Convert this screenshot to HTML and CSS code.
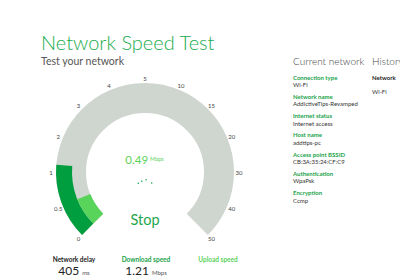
FILE: index.html
```html
<!DOCTYPE html>
<html>
<head>
<meta charset="utf-8">
<link rel="stylesheet" href="styles.css">
</head>
<body>
<div class="page">
  <section class="main">
    <h1 class="title">Network Speed Test</h1>
    <p class="subtitle">Test your network</p>
    <svg class="gauge" viewBox="38 70 252 182" width="252" height="182">
      <path class="arc-bg" d="M92.67 225.33 A74 74 0 1 1 197.33 225.33"/>
      <path class="arc-dl" d="M87.73 230.27 A81 81 0 0 1 64.27 166.36"/>
      <path class="arc-now" d="M98.33 219.67 A66 66 0 0 1 83.81 197.72"/>
      <g class="ticks">
        <text x="78.5" y="239.5">0</text>
        <text x="58.2" y="209">0.5</text>
        <text x="51" y="173">1</text>
        <text x="58.2" y="137">2</text>
        <text x="78.5" y="106.5">3</text>
        <text x="109" y="86.2">4</text>
        <text x="145" y="79">5</text>
        <text x="181" y="86.2">10</text>
        <text x="211.5" y="106.5">15</text>
        <text x="231.8" y="137">20</text>
        <text x="239" y="173">30</text>
        <text x="231.8" y="209">40</text>
        <text x="211.5" y="239.5">50</text>
      </g>
      <text class="speed" x="144.5" y="160"><tspan class="speed-num">0.49</tspan><tspan class="speed-unit" dx="2">Mbps</tspan></text>
      <g class="dots">
        <circle cx="138.3" cy="184.3" r="0.8"/>
        <circle cx="141.7" cy="182.3" r="0.8"/>
        <circle cx="146" cy="180.7" r="0.8"/>
        <circle cx="151.7" cy="184" r="0.8"/>
      </g>
      <text class="stop" x="145" y="220">Stop</text>
    </svg>
    <div class="stats">
      <div class="stat">
        <div class="stat-label">Network delay</div>
        <div class="stat-value">405<span class="unit">ms</span></div>
      </div>
      <div class="stat">
        <div class="stat-label dl">Download speed</div>
        <div class="stat-value">1.21<span class="unit">Mbps</span></div>
      </div>
      <div class="stat">
        <div class="stat-label ul">Upload speed</div>
        <div class="stat-value"></div>
      </div>
    </div>
  </section>
  <section class="current">
    <h2 class="heading">Current network</h2>
    <dl class="info">
      <div class="item"><dt>Connection type</dt><dd>Wi-Fi</dd></div>
      <div class="item"><dt>Network name</dt><dd>AddictiveTips-Revamped</dd></div>
      <div class="item"><dt>Internet status</dt><dd>Internet access</dd></div>
      <div class="item"><dt>Host name</dt><dd>addtips-pc</dd></div>
      <div class="item"><dt>Access point BSSID</dt><dd>CB:3A:35:24:CF:C9</dd></div>
      <div class="item"><dt>Authentication</dt><dd>WpaPsk</dd></div>
      <div class="item"><dt>Encryption</dt><dd>Ccmp</dd></div>
    </dl>
  </section>
  <section class="history">
    <h2 class="heading">History</h2>
    <div class="hist-label">Network</div>
    <div class="hist-value">Wi-Fi</div>
  </section>
</div>
</body>
</html>
```
FILE: styles.css
```css
html, body {
  margin: 0;
  padding: 0;
  background: #ffffff;
}
body {
  width: 400px;
  height: 280px;
  overflow: hidden;
  font-family: "Lato", "Open Sans", sans-serif;
  color: #333;
}
.page {
  display: flex;
  padding: 30px 0 0 41px;
  box-sizing: border-box;
  height: 280px;
}
.main {
  width: 252px;
  flex: none;
  display: flex;
  flex-direction: column;
}
.title {
  margin: 0;
  font-weight: 300;
  font-size: 20px;
  line-height: 24px;
  color: #20ad4e;
  white-space: nowrap;
}
.subtitle {
  margin: 1px 0 0;
  font-size: 10.5px;
  line-height: 12px;
  font-weight: 400;
  color: #555;
}
.gauge {
  display: block;
  margin-left: -3px;
  margin-top: 2px;
}
.arc-bg {
  fill: none;
  stroke: #cfd5cf;
  stroke-width: 30;
}
.arc-dl {
  fill: none;
  stroke: #009e3f;
  stroke-width: 16;
}
.arc-now {
  fill: none;
  stroke: #58d45a;
  stroke-width: 14;
}
.ticks text {
  font-size: 6px;
  fill: #444;
  text-anchor: middle;
  dominant-baseline: central;
}
.speed {
  text-anchor: middle;
  dominant-baseline: central;
  fill: #5cd35c;
}
.speed-num { font-size: 11.5px; }
.speed-unit { font-size: 5.5px; }
.dots circle { fill: #1fa64a; }
.stop {
  font-size: 14.5px;
  fill: #1fa64a;
  text-anchor: middle;
  dominant-baseline: central;
}
.stats {
  display: flex;
  margin-left: -3px;
  margin-top: 5px;
}
.stat {
  width: 72px;
  text-align: center;
}
.stat-label {
  font-size: 6.5px;
  line-height: 8px;
  font-weight: 700;
  color: #222;
}
.stat-label.dl { color: #1aa34a; }
.stat-label.ul { color: #5cd35c; }
.stat-value {
  font-size: 12px;
  line-height: 13px;
  color: #222;
}
.unit {
  font-size: 6px;
  margin-left: 3px;
  color: #555;
}
.current {
  width: 79px;
  flex: none;
  padding-top: 25px;
}
.heading {
  margin: 0 0 6.5px;
  font-size: 10px;
  line-height: 12px;
  font-weight: 300;
  color: #444;
  white-space: nowrap;
}
.info {
  margin: 0;
}
.item {
  margin-bottom: 4.3px;
}
.item dt {
  font-size: 6px;
  line-height: 7.5px;
  font-weight: 700;
  color: #1aa34a;
  white-space: nowrap;
}
.item dd {
  margin: 0;
  font-size: 6px;
  line-height: 7.5px;
  color: #333;
  white-space: nowrap;
}
.history {
  padding-top: 25px;
  flex: none;
}
.hist-label {
  font-size: 6px;
  line-height: 7.5px;
  font-weight: 700;
  color: #222;
}
.hist-value {
  margin-top: 6.5px;
  font-size: 6px;
  line-height: 7.5px;
  color: #333;
}
```
